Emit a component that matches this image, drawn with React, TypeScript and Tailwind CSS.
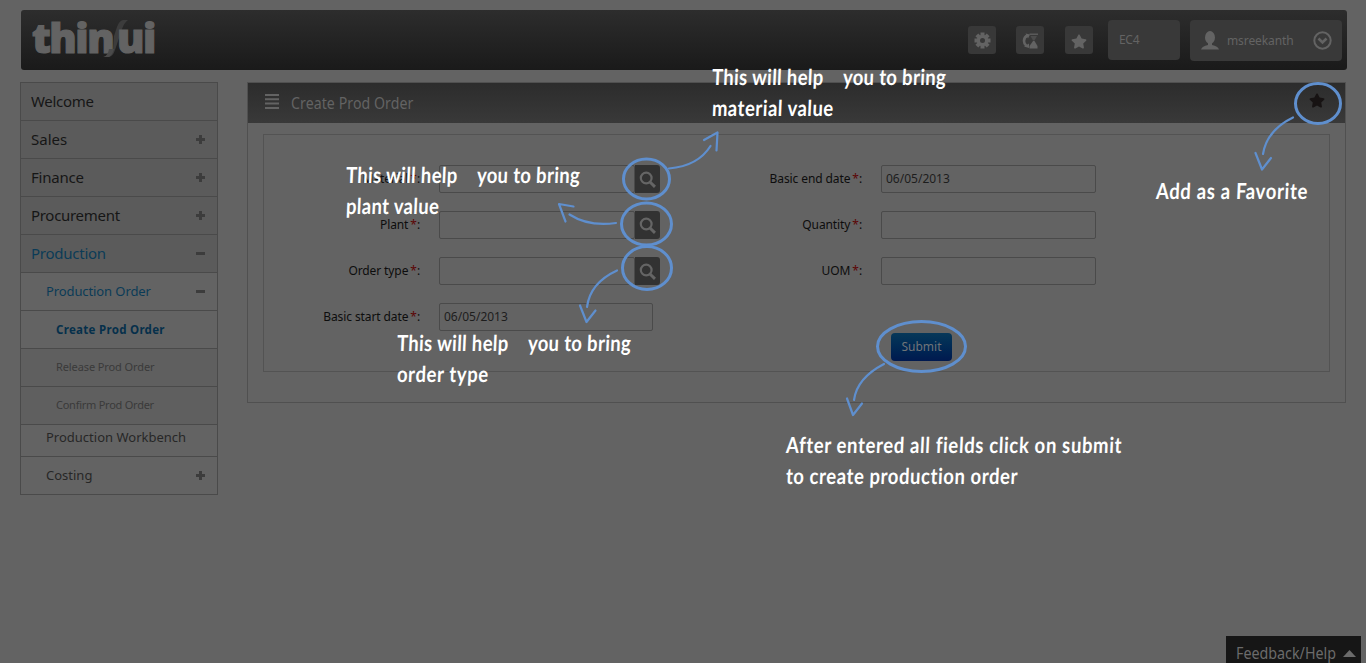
import React from "react";
import { FaStar } from "react-icons/fa";

type NavItem = {
  label: string;
  row: string;
  text: string;
  sign?: "plus" | "minus";
};

const ink = "text-[#161616]";

const nav: NavItem[] = [
  { label: "Welcome", row: "h-[38px] pl-[10px] bg-[#5b5b5b]", text: `text-[15px] tracking-[-0.3px] ${ink}` },
  { label: "Sales", row: "h-[38px] pl-[10px] bg-[#5b5b5b]", text: `text-[15px] ${ink}`, sign: "plus" },
  { label: "Finance", row: "h-[38px] pl-[10px] bg-[#5b5b5b]", text: `text-[15px] tracking-[-0.2px] ${ink}`, sign: "plus" },
  { label: "Procurement", row: "h-[38px] pl-[10px] bg-[#5b5b5b]", text: `text-[15px] tracking-[-0.3px] ${ink}`, sign: "plus" },
  { label: "Production", row: "h-[38px] pl-[10px] bg-[#5b5b5b]", text: "text-[15px] tracking-[-0.25px] text-[#0b3b57]", sign: "minus" },
  { label: "Production Order", row: "h-[38px] pl-[25px]", text: "text-[13px] tracking-[-0.1px] text-[#0b3b57]", sign: "minus" },
  { label: "Create Prod Order", row: "h-[38px] pl-[35px]", text: "text-[11.5px] tracking-[0.3px] font-bold text-[#06304b]" },
  { label: "Release Prod Order", row: "h-[38px] pl-[35px] bg-[#5f5f5f]", text: "text-[11px] tracking-[-0.1px] text-[#3a3a3a]" },
  { label: "Confirm Prod Order", row: "h-[38px] pl-[35px] bg-[#5f5f5f]", text: "text-[11px] tracking-[-0.25px] text-[#3a3a3a]" },
  { label: "Production Workbench", row: "h-[32px] pl-[25px] pb-[6px]", text: "text-[13px] text-[#272727]" },
  { label: "Costing", row: "h-[38px] pl-[25px]", text: "text-[13px] text-[#272727]", sign: "plus" },
];

function Sign({ kind }: { kind: "plus" | "minus" }) {
  return (
    <svg className="h-[9px] w-[9px]" viewBox="0 0 9 9" fill="#3c3c3c">
      <rect x="0" y="3" width="9" height="3" />
      {kind === "plus" && <rect x="3" y="0" width="3" height="9" />}
    </svg>
  );
}

function Sidebar() {
  return (
    <nav className="mt-3 w-[198px] border border-t-0 border-[#4a4a4a]">
      {nav.map((n) => (
        <div key={n.label} className={`flex items-center justify-between border-t border-[#4a4a4a] pr-[12px] ${n.row}`}>
          <span className={`whitespace-nowrap ${n.text}`}>{n.label}</span>
          {n.sign && <Sign kind={n.sign} />}
        </div>
      ))}
    </nav>
  );
}

function Logo() {
  return (
    <div className="ml-[11px] flex h-[54px] items-center text-[41px] leading-none font-extrabold tracking-[-1.5px] text-[#636363] [font-family:'Open_Sans',sans-serif] [-webkit-text-stroke:1.2px_#636363]">
      <span className="w-[81px] whitespace-nowrap">thin</span>
      <svg className="-ml-[11px] mt-[4px] h-[38px] w-[27px]" viewBox="0 0 27 38">
        <path d="M26 0H21Q17 1 15 7L12 16 11 29 7 33Q5 36 1 37H7Q11 36 13 30L20 9Q22 3 26 0Z" fill="#3c3c3c" />
        <path d="M7 29H12Q11 34 7 37H2Q6 35 7 29Z" fill="#4a4a4a" />
      </svg>
      <span className="-ml-[12px] whitespace-nowrap">ui</span>
    </div>
  );
}

function Gear() {
  return (
    <svg className="h-[17px] w-[17px]" viewBox="-8.5 -8.5 17 17">
      <g fill="#636363">
        <rect x="-2" y="-8" width="4" height="16" />
        <rect x="-2" y="-8" width="4" height="16" transform="rotate(45)" />
        <rect x="-2" y="-8" width="4" height="16" transform="rotate(90)" />
        <rect x="-2" y="-8" width="4" height="16" transform="rotate(135)" />
        <circle r="5.800" />
      </g>
      <circle r="2.500" fill="#383838" />
    </svg>
  );
}

function Header() {
  const tile = "flex h-7 w-7 items-center justify-center rounded-[3px] bg-[#383838] text-[#636363]";
  return (
    <header className="flex h-[60px] w-[1326px] justify-between rounded-[3px] bg-linear-to-b from-[#2d2d2d] to-[#1a1a1a]">
      <Logo />
      <div className="flex items-start pr-[5px]">
        <div className={`mt-4 ${tile}`}>
          <Gear />
        </div>
        <div className={`mt-4 ml-5 ${tile}`}>
          <svg className="mt-[2px] h-[16px] w-[17px]" viewBox="0 0 17 16">
            <path d="M5.500 2.500Q2 4 2 8Q2 11 4.500 13" fill="none" stroke="#636363" strokeWidth="2.600" />
            <path d="M3.500 .5L8 1.500L6 5.500ZM2 13.500L7 10.500L7 15Z" fill="#636363" />
            <path d="M7.500 .5H16V2H7.500Z" fill="#5a5a5a" />
            <path d="M8.500 3H15L12.500 7.500H11Z" fill="#4c4c4c" />
            <path d="M11 8H12.500L15.500 13V15.500H7.500V13Z" fill="#636363" />
          </svg>
        </div>
        <div className={`mt-4 ml-[21px] ${tile}`}>
          <FaStar className="mt-[2px] h-[15px] w-[16px]" />
        </div>
        <div className="mt-[10px] ml-[15px] flex h-10 w-[72px] items-center rounded-[4px] bg-[#393939] pl-[11px] text-[12px] tracking-[-0.3px] text-[#636363]">
          EC4
        </div>
        <div className="mt-[10px] ml-[10px] flex h-[41px] w-[152px] items-center rounded-[4px] bg-[#393939] pl-[11px] text-[#636363]">
          <svg className="h-[19px] w-[18px]" viewBox="0 0 18 19" fill="currentColor">
            <ellipse cx="9" cy="6.500" rx="5" ry="6.500" />
            <path d="M7 11H11V14Q17 15 18 18.500H0Q1 15 7 14Z" />
          </svg>
          <span className="ml-[8px] w-[86px] text-[12px] tracking-[-0.1px]">msreekanth</span>
          <svg className="h-[19px] w-[19px]" viewBox="0 0 19 19" fill="none" stroke="currentColor">
            <circle cx="9.500" cy="9.500" r="8.200" strokeWidth="2" />
            <path d="M5.500 7.500L9.500 11.500L13.500 7.500" strokeWidth="2.600" />
          </svg>
        </div>
      </div>
    </header>
  );
}

function Field({ label, value = "", search = false, wide = false }: { label: string; value?: string; search?: boolean; wide?: boolean }) {
  return (
    <div className="flex h-[28px] items-center text-[12px] text-[#0d0d0d]">
      <div className="w-[156px] text-right tracking-[-0.1px] whitespace-nowrap">
        {label} <span className="-ml-[1px] text-[#5c0505]">*</span>:
      </div>
      <div className={`ml-[19px] flex h-[28px] items-center rounded-[2px] border border-[#4a4a4a] pl-[4px] text-[#1d1d1d] ${wide ? "w-[215px]" : search ? "w-[196px]" : "w-[214px]"}`}>
        <span>{value}</span>
      </div>
      {search && (
        <div className="flex h-[28px] w-[25px] items-center justify-center rounded-r-[3px] bg-[#323232]">
          <svg className="h-[17px] w-[17px]" viewBox="0 0 17 17" fill="none" stroke="#656565">
            <circle cx="7.200" cy="7" r="5.400" strokeWidth="2.200" />
            <path d="M11 11L16 15.800" strokeWidth="3" />
          </svg>
        </div>
      )}
    </div>
  );
}

function OrderPanel() {
  return (
    <main className="mt-3 h-[321px] w-[1099px] border border-[#505050]">
      <div className="flex h-[40px] items-center justify-between bg-linear-to-b from-[#2c2c2c] to-[#393939] pr-[20px] pl-[17px]">
        <div className="flex items-center">
          <svg className="mb-[3px] h-[15px] w-[14px]" viewBox="0 0 14 15" fill="#636363">
            <path d="M0 0H14V2H0ZM0 4.300H14V6.300H0ZM0 8.600H14V10.600H0ZM0 13H14V15H0Z" />
          </svg>
          <span className="ml-[12px] origin-left scale-x-[0.83] text-[17px] tracking-[0.1px] text-[#636363]">Create Prod Order</span>
        </div>
        <FaStar className="mb-[6px] h-[15px] w-[16px] text-[#171313]" />
      </div>
      <div className="mt-[11px] ml-[15px] flex h-[238px] w-[1067px] border border-[#535353] pt-[30px]">
        <div className="flex w-[442px] flex-col gap-[18px]">
          <Field label="Material" search />
          <Field label="Plant" search />
          <Field label="Order type" search />
          <Field label="Basic start date" value="06/05/2013" />
        </div>
        <div className="flex flex-col gap-[18px]">
          <Field label="Basic end date" value="06/05/2013" wide />
          <Field label="Quantity" wide />
          <Field label="UOM" wide />
          <button className="mt-[30px] ml-[185px] h-[28px] w-[61px] rounded-[4px] bg-linear-to-b from-[#073859] to-[#00194f] text-[12px] text-[#707478]">Submit</button>
        </div>
      </div>
    </main>
  );
}

function Note({ place, children }: { place: string; children: React.ReactNode }) {
  return (
    <div className={`absolute origin-left scale-x-[0.84] -skew-x-3 text-[22px] leading-[31px] font-bold whitespace-pre text-white [font-family:Lato,sans-serif] [font-variant-ligatures:none] ${place}`}>
      {children}
    </div>
  );
}

function Tour() {
  return (
    <div className="absolute inset-0">
      <svg className="absolute inset-0 h-full w-full" viewBox="0 0 1366 663" fill="none" stroke="#5f8fce" strokeLinecap="round" strokeLinejoin="round">
        <g strokeWidth="3">
          <ellipse cx="1318" cy="103.500" rx="22.500" ry="20" />
          <ellipse cx="646.500" cy="179" rx="23" ry="20" />
          <ellipse cx="646.500" cy="224" rx="25" ry="21" />
          <ellipse cx="647" cy="268" rx="24.500" ry="21.500" />
          <ellipse cx="921.500" cy="346.500" rx="44" ry="25" />
        </g>
        <g strokeWidth="2.200">
          <path d="M1293 117.500Q1267 130 1263 154M1255.500 153L1262 169.500L1271 158" />
          <path d="M669 168.500Q698 166 710.500 146M704 140L717.500 132.500L716.500 150.500" />
          <path d="M616 223Q589 227 569.500 214.500M573.500 206.500L559 204L565.500 221.500" />
          <path d="M617 270.500Q590 283 587 307M580 305.500L586.500 322L595.500 310.500" />
          <path d="M884 364Q857 378 854 400M847 398.500L853 415L862 403.500" />
        </g>
      </svg>
      <Note place="left-[712px] top-[61px] tracking-[0.42px]">{"This will help"}</Note>
      <Note place="left-[843px] top-[61px] tracking-[0.4px]">{"you to bring"}</Note>
      <Note place="left-[712px] top-[92px] tracking-[0.6px]">{"material value"}</Note>
      <Note place="left-[346px] top-[159px] tracking-[0.42px]">{"This will help"}</Note>
      <Note place="left-[477px] top-[159px] tracking-[0.4px]">{"you to bring"}</Note>
      <Note place="left-[346px] top-[190px] tracking-[0.43px]">{"plant value"}</Note>
      <Note place="left-[397px] top-[327px] tracking-[0.42px]">{"This will help"}</Note>
      <Note place="left-[528px] top-[327px] tracking-[0.4px]">{"you to bring"}</Note>
      <Note place="left-[397px] top-[358px] tracking-[0.75px]">{"order type"}</Note>
      <Note place="left-[1156px] top-[175px] tracking-[0.8px]">{"Add as a Favorite"}</Note>
      <Note place="left-[786px] top-[429px] tracking-[0.78px]">{"After entered all fields click on submit"}</Note>
      <Note place="left-[786px] top-[460px] tracking-[0.7px]">{"to create production order"}</Note>
    </div>
  );
}

export default function App() {
  return (
    <div className="relative flex h-[663px] w-[1366px] flex-col overflow-hidden bg-[#636363] pt-[10px] [font-family:'Noto_Sans',sans-serif]">
      <div className="pl-[21px]">
        <Header />
      </div>
      <div className="flex grow items-start gap-[29px] pl-[20px]">
        <Sidebar />
        <OrderPanel />
      </div>
      <footer className="mr-[5px] flex h-[27px] w-[135px] items-center self-end bg-[#161616] pt-[6px] pl-[10px] text-[#6b6b6b]">
        <span className="w-[107px] origin-left scale-x-[0.84] text-[17px] leading-none whitespace-nowrap">Feedback/Help</span>
        <svg className="mt-[2px] h-[7px] w-[13px]" viewBox="0 0 13 7" fill="currentColor">
          <path d="M6.500 0L13 7H0Z" />
        </svg>
      </footer>
      <Tour />
    </div>
  );
}
